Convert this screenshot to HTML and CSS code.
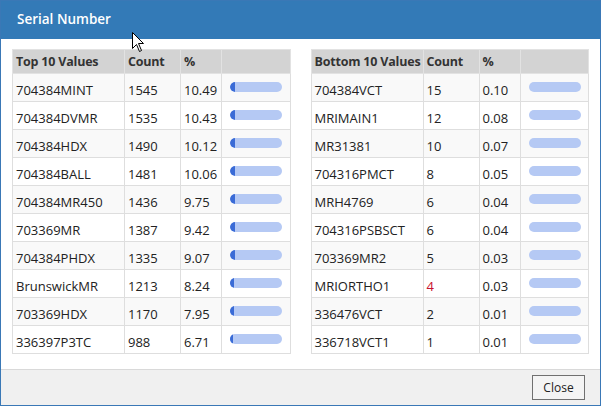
FILE: index.html
```html
<!DOCTYPE html>
<html>
<head>
<meta charset="utf-8">
<link rel="stylesheet" href="styles.css">
</head>
<body>
<div class="window">
  <div class="titlebar">Serial Number</div>
  <div class="content">
    <table class="grid">
      <thead><tr><th class="c1">Top 10 Values</th><th class="c2">Count</th><th class="c3">%</th><th class="c4"></th></tr></thead>
      <tbody>
        <tr><td>704384MINT</td><td>1545</td><td>10.49</td><td><div class="bar"><div class="fill" style="width:10.49%"></div></div></td></tr>
        <tr><td>704384DVMR</td><td>1535</td><td>10.43</td><td><div class="bar"><div class="fill" style="width:10.43%"></div></div></td></tr>
        <tr><td>704384HDX</td><td>1490</td><td>10.12</td><td><div class="bar"><div class="fill" style="width:10.12%"></div></div></td></tr>
        <tr><td>704384BALL</td><td>1481</td><td>10.06</td><td><div class="bar"><div class="fill" style="width:10.06%"></div></div></td></tr>
        <tr><td>704384MR450</td><td>1436</td><td>9.75</td><td><div class="bar"><div class="fill" style="width:9.75%"></div></div></td></tr>
        <tr><td>703369MR</td><td>1387</td><td>9.42</td><td><div class="bar"><div class="fill" style="width:9.42%"></div></div></td></tr>
        <tr><td>704384PHDX</td><td>1335</td><td>9.07</td><td><div class="bar"><div class="fill" style="width:9.07%"></div></div></td></tr>
        <tr><td>BrunswickMR</td><td>1213</td><td>8.24</td><td><div class="bar"><div class="fill" style="width:8.24%"></div></div></td></tr>
        <tr><td>703369HDX</td><td>1170</td><td>7.95</td><td><div class="bar"><div class="fill" style="width:7.95%"></div></div></td></tr>
        <tr><td>336397P3TC</td><td>988</td><td>6.71</td><td><div class="bar"><div class="fill" style="width:6.71%"></div></div></td></tr>
      </tbody>
    </table>
    <table class="grid">
      <thead><tr><th class="c1">Bottom 10 Values</th><th class="c2">Count</th><th class="c3">%</th><th class="c4"></th></tr></thead>
      <tbody>
        <tr><td>704384VCT</td><td>15</td><td>0.10</td><td><div class="bar"></div></td></tr>
        <tr><td>MRIMAIN1</td><td>12</td><td>0.08</td><td><div class="bar"></div></td></tr>
        <tr><td>MR31381</td><td>10</td><td>0.07</td><td><div class="bar"></div></td></tr>
        <tr><td>704316PMCT</td><td>8</td><td>0.05</td><td><div class="bar"></div></td></tr>
        <tr><td>MRH4769</td><td>6</td><td>0.04</td><td><div class="bar"></div></td></tr>
        <tr><td>704316PSBSCT</td><td>6</td><td>0.04</td><td><div class="bar"></div></td></tr>
        <tr><td>703369MR2</td><td>5</td><td>0.03</td><td><div class="bar"></div></td></tr>
        <tr><td>MRIORTHO1</td><td class="warn">4</td><td>0.03</td><td><div class="bar"></div></td></tr>
        <tr><td>336476VCT</td><td>2</td><td>0.01</td><td><div class="bar"></div></td></tr>
        <tr><td>336718VCT1</td><td>1</td><td>0.01</td><td><div class="bar"></div></td></tr>
      </tbody>
    </table>
  </div>
  <div class="footer"><button class="btn">Close</button></div>
  <svg class="cursor" width="13" height="21" viewBox="0 0 13 21"><path d="M0.5 0.5 L0.5 16.5 L4.5 12.5 L7.5 19.5 L9.5 18.5 L6.5 11.5 L11.5 11.5 Z" fill="#fff" stroke="#000" stroke-width="1" stroke-linejoin="miter"/></svg>
</div>
</body>
</html>
```
FILE: styles.css
```css
html, body { margin: 0; padding: 0; background: #fff; }
body { font-family: "Open Sans", "DejaVu Sans", sans-serif; color: #222; }
.window {
  position: relative;
  width: 599px;
  height: 404px;
  border: 1px solid #3a78b6;
  display: flex;
  flex-direction: column;
  background: #fff;
}
.titlebar {
  height: 38px;
  background: #337ab7;
  color: #fff;
  font-size: 13.5px;
  font-weight: 600;
  line-height: 36px;
  padding-left: 16px;
  box-sizing: border-box;
}
.content {
  flex: 1;
  display: flex;
  gap: 20px;
  padding: 10px 11px 0 11px;
  align-items: flex-start;
}
.grid {
  border-collapse: collapse;
  width: 279px;
  table-layout: fixed;
  font-size: 13px;
}
.grid th {
  background: #d3d3d3;
  border: 1px solid #e2e2e2;
  height: 24px;
  padding: 0 3px;
  text-align: left;
  font-size: 12.5px;
  font-weight: 700;
  letter-spacing: -0.2px;
  color: #333;
  white-space: nowrap;
  box-sizing: border-box;
}
.grid .c1 { width: 112px; }
.grid .c2 { width: 56px; }
.grid .c3 { width: 41px; }
.grid td {
  border: 1px solid #dedede;
  height: 28px;
  padding: 4px 3px 0 3px;
  box-sizing: border-box;
  white-space: nowrap;
  color: #222;
}
.grid td.warn { color: #c8102e; }
.grid tbody tr:nth-child(odd) td { background: #f9f9f9; }
.grid td:last-child { padding: 0 0 0 8px; }
.bar {
  width: 52px;
  height: 10px;
  border-radius: 5px;
  background: #b5c9f4;
  overflow: hidden;
  margin-top: -1px;
}
.fill {
  height: 100%;
  background: #3a6bd6;
  border-radius: 5px 0 0 5px;
}
.footer {
  height: 36px;
  border-top: 1px solid #d9d9d9;
  background: #f0f0f0;
  display: flex;
  justify-content: flex-end;
  align-items: flex-start;
  padding: 5px 15px 0 0;
  box-sizing: border-box;
}
.btn {
  width: 53px;
  height: 25px;
  border: 1px solid #707070;
  background: #f4f4f4;
  font-family: "Open Sans", "DejaVu Sans", sans-serif;
  font-size: 12px;
  color: #222;
  padding: 0;
}
.cursor {
  position: absolute;
  left: 131px;
  top: 31px;
}
```
